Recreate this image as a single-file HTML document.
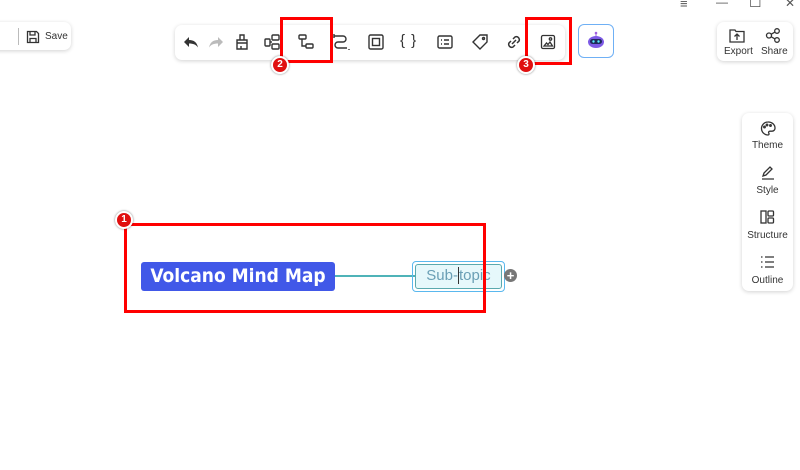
<!DOCTYPE html>
<html><head><meta charset="utf-8"><style>
*{margin:0;padding:0;box-sizing:border-box}
body{width:800px;height:470px;background:#fff;position:relative;overflow:hidden;font-family:"Liberation Sans",sans-serif}
.abs{position:absolute}
.panel{background:#fff;border-radius:7px;box-shadow:0 1px 4px rgba(0,0,0,.18)}
.ic{position:absolute;top:33px;width:18px;height:18px}
.red{position:absolute;border:3px solid #f00}
.badge{position:absolute;width:18px;height:18px;border-radius:50%;background:#e01010;border:2px solid #fff;color:#fff;font-size:10px;font-weight:bold;text-align:center;line-height:14px;box-shadow:0 0 2px rgba(0,0,0,.5)}
.side{position:absolute;left:0;width:51px;text-align:center;font-size:10px;color:#333}
</style></head><body>
<div class="panel abs" style="left:-10px;top:22px;width:81px;height:28px"></div>
<div class="abs" style="left:18px;top:28px;width:1px;height:17px;background:#bbb"></div>
<svg class="abs" style="left:26px;top:30px" width="14" height="14" viewBox="0 0 14 14" fill="none" stroke="#333" stroke-width="1.3"><path d="M1.5 1.5h9l2 2v9h-11z"/><path d="M4 1.5v3.5h5V1.5M4 12.5V8.5h6v4"/></svg>
<div class="abs" style="left:45px;top:31px;font-size:10px;color:#333">Save</div>

<div class="panel abs" style="left:175px;top:25px;width:390px;height:35px"></div>
<svg class="ic" style="left:182px" viewBox="0 0 18 18"><path d="M7 4L2 9l5 5v-3.5c4 0 7 1 9 4-1-5-4-7.5-9-7.5z" fill="#333"/></svg>
<svg class="ic" style="left:207px" viewBox="0 0 18 18"><path d="M11 4l5 5-5 5v-3.5c-4 0-7 1-9 4 1-5 4-7.5 9-7.5z" fill="#bbb"/></svg>
<svg class="ic" style="left:233px" viewBox="0 0 18 18" fill="none" stroke="#333" stroke-width="1.4"><path d="M7 2h4v5H7zM4 7h10v3H4zM4 10v6h10v-6M8 16v-3"/></svg>
<svg class="ic" style="left:263px" viewBox="0 0 18 18" fill="none" stroke="#333" stroke-width="1.4"><rect x="2" y="6" width="5" height="7" rx="1"/><rect x="9" y="2" width="7" height="5" rx="1"/><rect x="9" y="11" width="7" height="5" rx="1"/><path d="M7 9h2"/></svg>
<svg class="ic" style="left:297px" viewBox="0 0 18 18" fill="none" stroke="#333" stroke-width="1.4"><rect x="2" y="2" width="7" height="4" rx="1"/><rect x="9" y="11" width="7" height="4" rx="1"/><path d="M5 6v7h4"/></svg>
<svg class="ic" style="left:332px" viewBox="0 0 18 18" fill="none" stroke="#333" stroke-width="1.4"><path d="M2 3h9a3 3 0 010 6H6a3 3 0 000 6h9M2 1v4M17 16v1"/></svg>
<svg class="ic" style="left:367px" viewBox="0 0 18 18" fill="none" stroke="#333" stroke-width="1.4"><rect x="2" y="2" width="14" height="14" rx="1.5"/><rect x="5.5" y="5.5" width="7" height="7"/></svg>
<div class="abs" style="left:400px;top:32px;font-size:15px;color:#333;letter-spacing:1px">{ }</div>
<svg class="ic" style="left:436px" viewBox="0 0 18 18" fill="none" stroke="#333" stroke-width="1.4"><rect x="2" y="3" width="14" height="12" rx="1.5"/><path d="M5 7h1M8 7h5M5 11h1M8 11h5"/></svg>
<svg class="ic" style="left:471px" viewBox="0 0 18 18" fill="none" stroke="#333" stroke-width="1.4"><path d="M9 2h7v7l-7 7-7-7z"/><circle cx="12.5" cy="5.5" r="1"/></svg>
<svg class="ic" style="left:505px" viewBox="0 0 18 18" fill="none" stroke="#333" stroke-width="1.5"><path d="M8 6l2-2a3 3 0 014 4l-2 2M10 12l-2 2a3 3 0 01-4-4l2-2M7 11l4-4"/></svg>
<svg class="ic" style="left:539px" viewBox="0 0 18 18" fill="none" stroke="#333" stroke-width="1.3"><rect x="2.5" y="2.5" width="13" height="13" rx="1.5"/><path d="M5 13l2.5-3 1.5 1.5 2-2.5 2.5 4z" fill="none"/><circle cx="11.5" cy="6" r="1.2"/></svg>
<div class="abs" style="left:578px;top:24px;width:36px;height:34px;border:1px solid #6fb0f5;border-radius:6px;background:#fff"></div>
<svg class="abs" style="left:586px;top:30px" width="20" height="20" viewBox="0 0 20 20"><circle cx="10" cy="3" r="1.3" fill="#a060e0"/><path d="M10 4v2" stroke="#a060e0"/><ellipse cx="10" cy="12" rx="8" ry="6" fill="#7d5ae6"/><rect x="4" y="9" width="12" height="5" rx="2.5" fill="#1e2a5a"/><circle cx="7.5" cy="11.5" r="1.2" fill="#5ef"/><circle cx="12.5" cy="11.5" r="1.2" fill="#5ef"/></svg>

<div class="abs" style="left:680px;top:-4px;font-size:13px;color:#555">≡</div>
<div class="abs" style="left:716px;top:-5px;font-size:12px;color:#555">—</div>
<div class="abs" style="left:749px;top:-6px;font-size:14px;color:#555">☐</div>
<div class="abs" style="left:785px;top:-4px;font-size:12px;color:#555">✕</div>

<div class="panel abs" style="left:717px;top:22px;width:76px;height:39px"></div>
<svg class="abs" style="left:729px;top:29px" width="16" height="14" viewBox="0 0 16 14" fill="none" stroke="#333" stroke-width="1.3"><path d="M1 1h5l1 1.5h8V13H1z"/><path d="M8 11V5M5.5 7.5L8 5l2.5 2.5"/></svg>
<div class="abs" style="left:724px;top:46px;font-size:10px;color:#333">Export</div>
<svg class="abs" style="left:765px;top:28px" width="16" height="15" viewBox="0 0 16 15" fill="none" stroke="#333" stroke-width="1.3"><circle cx="4" cy="7.5" r="2.5"/><circle cx="12" cy="3" r="2.3"/><circle cx="12" cy="12" r="2.3"/><path d="M6 6.3l4-2.2M6 8.7l4 2.2"/></svg>
<div class="abs" style="left:761px;top:46px;font-size:10px;color:#333">Share</div>

<div class="panel abs" style="left:742px;top:113px;width:51px;height:178px">
<svg class="abs" style="left:18px;top:8px" width="16" height="15" viewBox="0 0 16 15" fill="none" stroke="#333" stroke-width="1.3"><path d="M8 1a6.5 6.5 0 100 13c1 0 1.3-1 .8-1.8-.6-1 0-2 1.2-2h2A3 3 0 0015 7 6.6 6 0 008 1z"/><circle cx="4.5" cy="6" r=".8"/><circle cx="7" cy="4" r=".8"/><circle cx="10.5" cy="4.5" r=".8"/></svg>
<div class="side" style="top:27px">Theme</div>
<svg class="abs" style="left:18px;top:52px" width="16" height="15" viewBox="0 0 16 15" fill="none" stroke="#333" stroke-width="1.3"><path d="M3 11l1-3 6-6 2 2-6 6zM2 14h12"/></svg>
<div class="side" style="top:72px">Style</div>
<svg class="abs" style="left:18px;top:97px" width="15" height="14" viewBox="0 0 15 14" fill="none" stroke="#333" stroke-width="1.3"><rect x="1" y="1" width="5" height="12"/><rect x="8" y="1" width="5.5" height="5" rx="1"/><rect x="8" y="8" width="5.5" height="5" rx="1"/></svg>
<div class="side" style="top:117px">Structure</div>
<svg class="abs" style="left:18px;top:142px" width="15" height="14" viewBox="0 0 15 14" fill="none" stroke="#333" stroke-width="1.3"><path d="M1 2h1.5M5 2h9M1 7h1.5M5 7h9M1 12h1.5M5 12h9"/></svg>
<div class="side" style="top:162px">Outline</div>
</div>

<div class="abs" style="left:335px;top:275px;width:80px;height:2px;background:#4fb3b8"></div>
<div class="abs" style="left:141px;top:262px;width:194px;height:29px;background:#4158e8;border-radius:3px;color:#fff;font-weight:bold;font-size:19px;text-align:center;line-height:29px;font-family:'DejaVu Sans Condensed','Liberation Sans',sans-serif">Volcano Mind Map</div>
<div class="abs" style="left:412px;top:261px;width:93px;height:31px;border:1.5px solid #5ab8ee;border-radius:4px;padding:2px">
<div style="width:100%;height:100%;border:1.5px solid #5aa9ae;border-radius:3px;background:#e6f8fb;color:#6a9fb5;font-size:15px;text-align:center;line-height:22px">Sub-<span style="border-left:1px solid #333">t</span>opic</div></div>
<div class="abs" style="left:504px;top:269px;width:13px;height:13px;border-radius:50%;background:#777;color:#fff;font-size:13px;font-weight:bold;text-align:center;line-height:13px">+</div>

<div class="red" style="left:124px;top:223px;width:362px;height:90px"></div>
<div class="badge" style="left:115px;top:211px">1</div>
<div class="red" style="left:280px;top:17px;width:53px;height:46px"></div>
<div class="badge" style="left:271px;top:56px">2</div>
<div class="red" style="left:525px;top:17px;width:47px;height:48px"></div>
<div class="badge" style="left:517px;top:56px">3</div>
</body></html>
